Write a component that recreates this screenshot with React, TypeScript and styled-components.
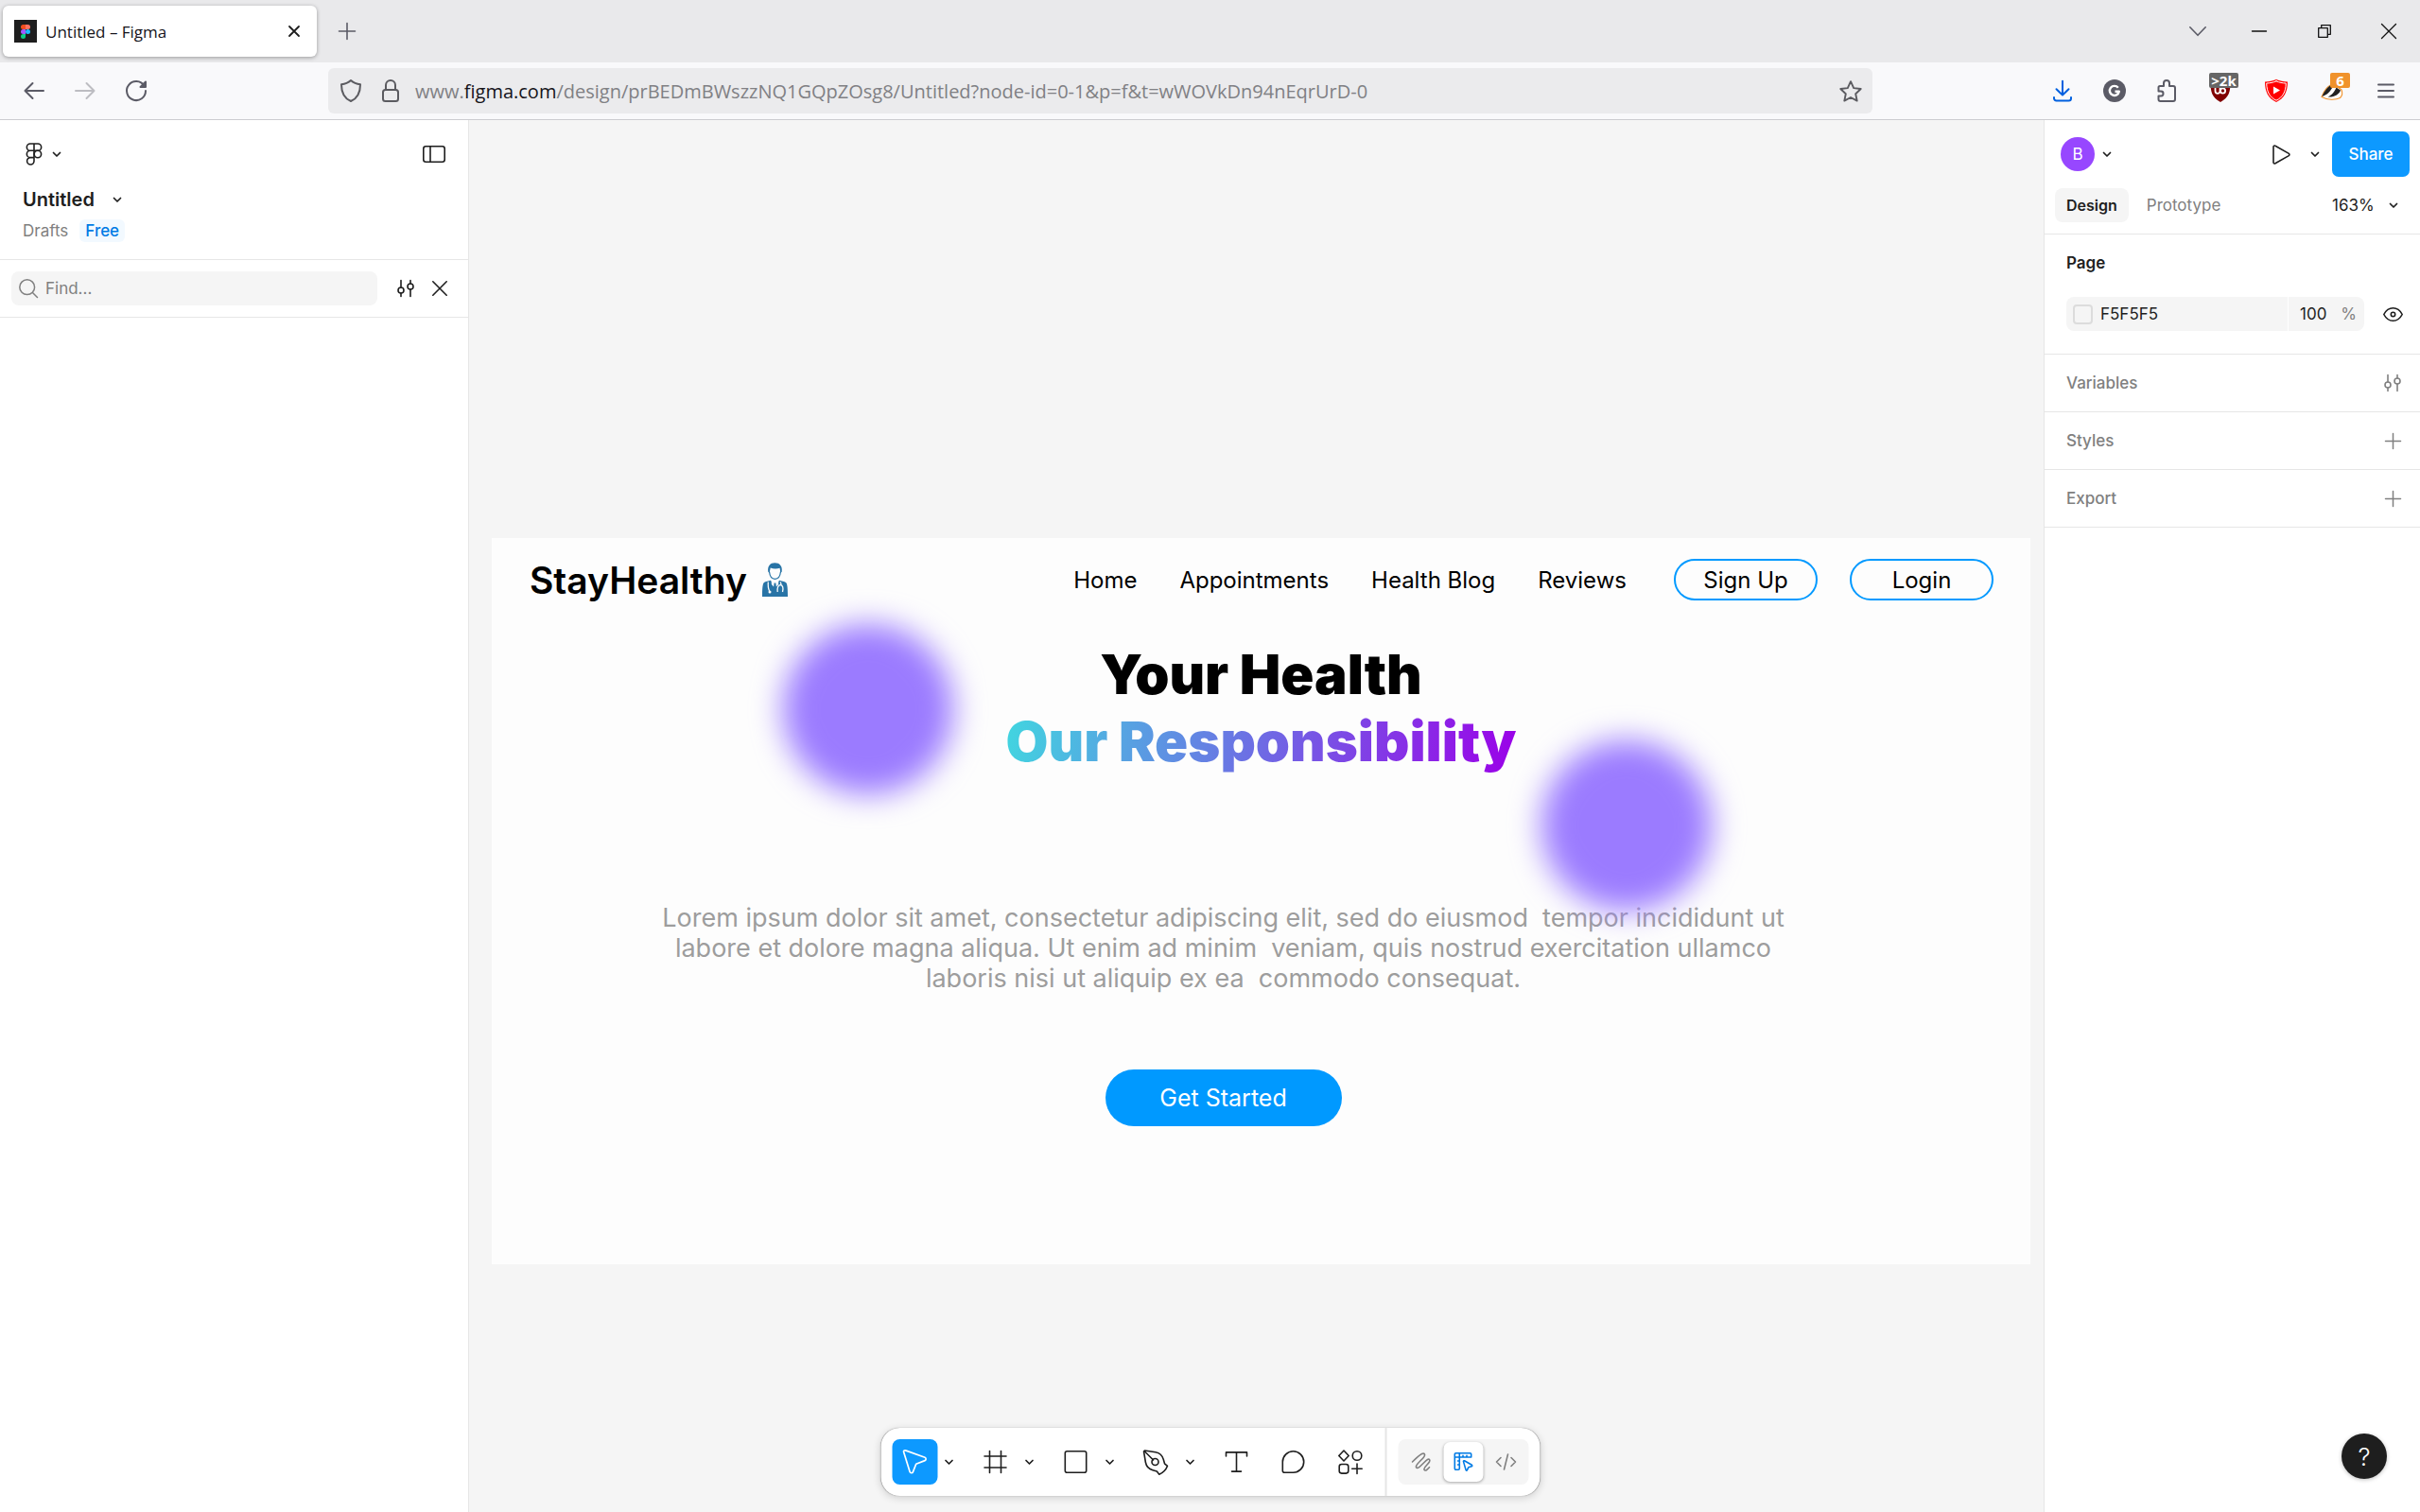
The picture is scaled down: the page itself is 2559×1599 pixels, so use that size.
import React from "react";
import styled, { createGlobalStyle } from "styled-components";

const ui = `Inter, "Liberation Sans", sans-serif`;
const chromeFont = `"Open Sans", "Noto Sans", sans-serif`;

const GlobalStyle = createGlobalStyle`
  *, *::before, *::after { box-sizing: border-box; }
  body { margin: 0; background: #f5f5f5; font-family: ${ui}; color: #1e1e1e; }
  button, input, select { font: inherit; color: inherit; border: 0; padding: 0; margin: 0; background: none; min-width: 0; }
  button { cursor: pointer; }
  a { color: inherit; text-decoration: none; }
  h1, h2, p { margin: 0; font-weight: inherit; }
  svg { display: block; flex: none; overflow: visible; }
`;

/* ---------- icons ---------- */

type IconProps = {
  w: number;
  h: number;
  stroke?: number;
  color?: string;
  children: React.ReactNode;
};

const Icon = ({ w, h, stroke = 2, color = "currentColor", children }: IconProps) => (
  <svg
    width={w}
    height={h}
    viewBox={`0 0 ${w} ${h}`}
    fill="none"
    stroke={color}
    strokeWidth={stroke}
    strokeLinecap="round"
    strokeLinejoin="round"
    aria-hidden="true"
  >
    {children}
  </svg>
);

const Chevron = () => (
  <Icon w={8} h={5} stroke={1.7}>
    <path d="M.5 .5 4 4 7.500 .5" />
  </Icon>
);

const Favicon = () => (
  <svg width="24" height="24" viewBox="0 0 24 24" aria-hidden="true">
    <rect width="24" height="24" fill="#1e1e1e" />
    <path d="M9.500 5H12v5H9.500a2.500 2.500 0 0 1 0-5z" fill="#f24e1e" />
    <path d="M12 5h2.500a2.500 2.500 0 0 1 0 5H12z" fill="#ff7262" />
    <path d="M9.500 10H12v5H9.500a2.500 2.500 0 0 1 0-5z" fill="#a259ff" />
    <circle cx="14.500" cy="12.500" r="2.500" fill="#1abcfe" />
    <path d="M9.500 15H12v2.500A2.500 2.500 0 1 1 9.500 15z" fill="#0acf83" />
  </svg>
);

const FigmaMark = () => (
  <Icon w={18} h={24} stroke={1.6}>
    <path d="M9 1H5a3.650 3.650 0 0 0 0 7.300h4zM9 1h4a3.650 3.650 0 0 1 0 7.300H9zM9 8.300H5a3.650 3.650 0 0 0 0 7.300h4zM9 15.600H5A3.700 3.700 0 1 0 9 19.300z" />
    <circle cx="12.900" cy="12" r="3.700" />
  </Icon>
);

const Sliders = () => (
  <Icon w={18} h={18} stroke={1.6}>
    <path d="M4 .5v7.500M4 14v3.500M14 .5v3.500M14 10v7.500" />
    <circle cx="4" cy="11" r="3" />
    <circle cx="14" cy="7" r="3" />
  </Icon>
);

const Plus = () => (
  <Icon w={17} h={17} stroke={1.5}>
    <path d="M8.500 .5v16M.5 8.500h16" />
  </Icon>
);

const Doctor = () => (
  <svg width="27" height="36" viewBox="0 0 27 36" aria-hidden="true">
    <path
      d="M7.500 9.500C8 14.500 10.500 17.300 13.500 17.300S19 14.500 19.500 9.500"
      fill="none"
      stroke="#2874a6"
      strokeWidth="1.200"
    />
    <path
      d="M6.300 9.800C5.400 3.500 8.600.3 13.300.3c5 0 8.300 3.200 7.400 9.500l-1.400 1.300-.7-5.300c-3.300 1.200-7.200.9-9.900-.2l-1.100 5.500z"
      fill="#2874a6"
    />
    <path
      d="M0 36c0-7 .3-12 1.300-14.200C2.300 20 5 20 9 18.800l4.500 6 4.500-6c4 1.200 6.700 1.200 7.700 3C26.700 24 27 29 27 36z"
      fill="#2874a6"
    />
    <path d="M9.600 18.500 13.500 24l3.900-5.500-.3 4.500-2.600 3-1-1.500-1 1.500-2.600-3z" fill="#fdfdfd" />
    <path d="M12.600 21.500h1.800l1 8.500h-3.800z" fill="#2874a6" />
    <path
      d="M6.300 20.500c-.3 4 0 7 1.300 9.500M19.200 20.500c.6 1.300.8 2 .8 3.200M16.200 31c-.6-4.500.6-7.300 3-7.300s3.500 3 2.300 7.300"
      fill="none"
      stroke="#fdfdfd"
      strokeWidth="1.300"
    />
    <circle cx="8" cy="31" r="1.500" fill="#fdfdfd" />
  </svg>
);

/* ---------- shared controls ---------- */

const IconButton = styled.button<{ $w?: number; $h?: number; $color?: string }>`
  display: flex;
  flex: none;
  align-items: center;
  justify-content: center;
  width: ${(p) => p.$w ?? 36}px;
  height: ${(p) => p.$h ?? 36}px;
  color: ${(p) => p.$color ?? "#1e1e1e"};
`;

const Spacer = styled.div<{ $basis?: number }>`
  flex: ${(p) => (p.$basis ? `0 1 ${p.$basis}px` : "1")};
`;

/* ---------- browser chrome ---------- */

const Screen = styled.div`
  position: relative;
  display: flex;
  flex-direction: column;
  min-height: 100vh;
`;

const TabStrip = styled.div`
  display: flex;
  align-items: center;
  height: 66px;
  padding-left: 3px;
  background: #e9e9eb;
  font-family: ${chromeFont};
`;

const Tab = styled.div`
  display: flex;
  align-items: center;
  width: 332px;
  height: 54px;
  padding: 0 6px 0 12px;
  gap: 9px;
  border-radius: 6px;
  background: #fff;
  box-shadow: 0 1px 4px rgba(0, 0, 0, 0.35);
  font-size: 17px;
  color: #15141a;
`;

const TabTitle = styled.span`
  flex: 1;
`;

const NavBar = styled.div`
  display: flex;
  align-items: center;
  height: 61px;
  padding: 0 12px;
  border-bottom: 1px solid #ccccd0;
  background: #f9f9fb;
`;

const NavGroup = styled.div<{ $gap: number }>`
  display: flex;
  gap: ${(p) => p.$gap}px;
`;

const UrlBar = styled.div`
  display: flex;
  flex: 1;
  align-items: center;
  height: 48px;
  padding: 0 2px 0 4px;
  border-radius: 6px;
  background: #ebebed;
  font-family: ${chromeFont};
  font-size: 20px;
  color: #808084;
`;

const UrlText = styled.div`
  flex: 1;
  padding-left: 4px;
  white-space: nowrap;
  overflow: hidden;

  b {
    font-weight: 400;
    color: #15141a;
  }
`;

const ExtensionButton = styled(IconButton)`
  position: relative;
`;

const Badge = styled.span<{ $bg: string; $w: number }>`
  position: absolute;
  top: 5px;
  right: 7px;
  width: ${(p) => p.$w}px;
  height: 16px;
  border-radius: 2px;
  background: ${(p) => p.$bg};
  color: #fff;
  font: 700 15px/16px ${chromeFont};
  text-align: center;
  white-space: nowrap;
`;

const BrowserTabs = () => (
  <TabStrip>
    <Tab>
      <Favicon />
      <TabTitle>Untitled – Figma</TabTitle>
      <IconButton aria-label="Close tab">
        <Icon w={12} h={12} stroke={1.8}>
          <path d="M1 1l10 10M11 1 1 11" />
        </Icon>
      </IconButton>
    </Tab>
    <IconButton $w={64} $h={48} $color="#5b5b66" aria-label="New tab">
      <Icon w={18} h={18} stroke={1.6}>
        <path d="M9 .5v17M.5 9h17" />
      </Icon>
    </IconButton>
    <Spacer />
    <IconButton $w={62} $h={48} $color="#5b5b66" aria-label="List all tabs">
      <Icon w={18} h={10} stroke={1.6}>
        <path d="M.8 .8 9 9.300 17.200 .8" />
      </Icon>
    </IconButton>
    <IconButton $w={68} $h={48} aria-label="Minimize">
      <Icon w={16} h={2} stroke={1.3} color="#111">
        <path d="M.5 1h15" />
      </Icon>
    </IconButton>
    <IconButton $w={70} $h={48} aria-label="Restore">
      <Icon w={14} h={14} stroke={1.3} color="#111">
        <path d="M.7 3.700h9.600v9.600H.7zM3.700 3.500V.7h9.600v9.600h-2.800" />
      </Icon>
    </IconButton>
    <IconButton $w={66} $h={48} aria-label="Close window">
      <Icon w={16} h={16} stroke={1.3} color="#111">
        <path d="M.5 .5l15 15M15.500 .5l-15 15" />
      </Icon>
    </IconButton>
  </TabStrip>
);

const BrowserNav = () => (
  <NavBar>
    <NavGroup $gap={6}>
      <IconButton $w={48} $h={48} $color="#5b5b66" aria-label="Back">
        <Icon w={22} h={18} stroke={2}>
          <path d="M21 9H1.500M9.500 1 1.500 9l8 8" />
        </Icon>
      </IconButton>
      <IconButton $w={48} $h={48} $color="#bdbdc2" aria-label="Forward">
        <Icon w={22} h={18} stroke={2}>
          <path d="M1 9h19.500M12.500 1l8 8-8 8" />
        </Icon>
      </IconButton>
      <IconButton $w={48} $h={48} $color="#5b5b66" aria-label="Reload">
        <Icon w={22} h={22} stroke={2}>
          <path d="M19.500 5.800A10 10 0 1 0 21 11" />
          <path d="M21 1.500V7h-5.500z" fill="currentColor" />
        </Icon>
      </IconButton>
    </NavGroup>
    <Spacer $basis={179} />
    <UrlBar>
      <IconButton $w={40} $color="#5b5b60" aria-label="Tracking protection">
        <Icon w={22} h={24} stroke={2}>
          <path d="M11 1c3 2.800 6.200 3.900 10 4.200 0 8-2 14.300-10 17.800C3 19.500 1 13.200 1 5.200 4.800 4.900 8 3.800 11 1z" />
        </Icon>
      </IconButton>
      <IconButton $w={44} $color="#5b5b60" aria-label="Site information">
        <Icon w={18} h={24} stroke={2}>
          <rect x="1" y="11" width="16" height="12" rx="2.500" />
          <path d="M4 11V6a5 5 0 0 1 10 0v5" />
        </Icon>
      </IconButton>
      <UrlText role="textbox" aria-label="Address">
        www.<b>figma.com</b>/design/prBEDmBWszzNQ1GQpZOsg8/Untitled?node-id=0-1&amp;p=f&amp;t=wWOVkDn94nEqrUrD-0
      </UrlText>
      <IconButton $w={42} $color="#5b5b60" aria-label="Bookmark this page">
        <Icon w={24} h={23} stroke={1.9}>
          <path d="M12 1.200l3.200 6.900 7.500.9-5.500 5.200 1.500 7.400L12 18l-6.700 3.600 1.500-7.400L1.300 9l7.500-.9z" />
        </Icon>
      </IconButton>
    </UrlBar>
    <Spacer $basis={177} />
    <NavGroup $gap={7}>
      <IconButton $w={48} $h={48} $color="#0060df" aria-label="Downloads">
        <Icon w={20} h={22} stroke={2}>
          <path d="M10 .8v14.500M3.500 9.300 10 15.500l6.500-6.200M1 18v1a2.500 2.500 0 0 0 2.500 2.500h13A2.500 2.500 0 0 0 19 19v-1" />
        </Icon>
      </IconButton>
      <IconButton $w={48} $h={48} aria-label="Grammar checker">
        <Icon w={24} h={24} stroke={2.400}>
          <circle cx="12" cy="12" r="12" fill="#5b5b66" stroke="none" />
          <path d="M15.800 8.800a5 5 0 1 0 1 4H12.500" stroke="#fff" strokeLinecap="butt" />
        </Icon>
      </IconButton>
      <IconButton $w={48} $h={48} $color="#5b5b66" aria-label="Extensions">
        <Icon w={20} h={24} stroke={2}>
          <path d="M1.500 8.500A1.500 1.500 0 0 1 3 7h4V4a3 3 0 0 1 6 0v3h4a2 2 0 0 1 2 2v12a2 2 0 0 1-2 2H3.500a2 2 0 0 1-2-2v-3.500H4a2.500 2.500 0 0 0 0-5H1.500z" />
        </Icon>
      </IconButton>
      <ExtensionButton $w={52} $h={48} aria-label="Content blocker">
        <Icon w={22} h={24} stroke={1.8}>
          <path d="M11 0c3 2 7 3 10.500 3 0 10-1.500 16-10.500 21C2 19 .5 13 .5 3 4 3 8 2 11 0z" fill="#800000" stroke="none" />
          <path d="M5.500 9.500v2.800a2.500 2.500 0 0 0 5 0V9.500" stroke="#fff" />
          <circle cx="13.500" cy="12" r="2.600" stroke="#fff" />
        </Icon>
        <Badge $bg="#666" $w={31}>&gt;2k</Badge>
      </ExtensionButton>
      <ExtensionButton $w={52} $h={48} aria-label="Video tools">
        <Icon w={24} h={24} stroke={1}>
          <path d="M12 0c4 1.800 7.500 2.200 12 2.500C24 13 20.500 20 12 24 3.500 20 0 13 0 2.500 4.500 2.200 8 1.800 12 0z" fill="#f00" stroke="none" />
          <path d="M12 1.800c3.600 1.600 6.500 2 10.300 2.300C22 13 19 18.800 12 22.200 5 18.800 2 13 1.700 4.100 5.500 3.800 8.400 3.400 12 1.800z" stroke="#fff" />
          <path d="M9 7.500v8l7-4z" fill="#fff" stroke="none" />
        </Icon>
      </ExtensionButton>
      <ExtensionButton $w={52} $h={48} aria-label="Privacy tools">
        <Icon w={24} h={24} stroke={1.2}>
          <path d="M1 18.500C3 13 8 5 14 5l8 6c1.500 4 1 6-1.500 8.500-5 2.500-13 2.500-19.500-1z" fill="#fff" stroke="#f0922b" />
          <path d="M1.500 18c1-3 5-9.500 8.500-11.500L13 7c-2 5-6 9.500-11.500 11zM7.500 18.500c4-1.500 7.500-6 9-10l4.500 3c-1.500 4-6 7.500-13.500 7z" fill="#222" stroke="none" />
        </Icon>
        <Badge $bg="#f0922b" $w={21}>6</Badge>
      </ExtensionButton>
      <IconButton $w={48} $h={48} $color="#5b5b66" aria-label="Menu">
        <Icon w={18} h={16} stroke={2}>
          <path d="M1 1.500h16M1 8h16M1 14.500h16" />
        </Icon>
      </IconButton>
    </NavGroup>
  </NavBar>
);

/* ---------- editor layout ---------- */

const Editor = styled.main`
  display: grid;
  grid-template-columns: 496px 1fr 398px;
  flex: 1;
`;

const LeftPanel = styled.aside`
  border-right: 1px solid #e6e6e6;
  background: #fff;
  font-size: 17px;
`;

const FileHeader = styled.div`
  padding: 18px;
  border-bottom: 1px solid #e6e6e6;
`;

const PanelRow = styled.div<{ $h: number }>`
  display: flex;
  align-items: center;
  height: ${(p) => p.$h}px;
`;

const MainMenu = styled.button`
  display: flex;
  align-items: center;
  gap: 11px;
  height: 36px;
  padding: 0 9px;
`;

const FileName = styled.button`
  display: flex;
  align-items: center;
  gap: 20px;
  height: 42px;
  margin-top: 9px;
  padding: 0 6px;
  font-size: 20px;
  font-weight: 600;
`;

const Location = styled.div`
  display: flex;
  align-items: center;
  gap: 12px;
  height: 24px;
  padding-left: 6px;
  color: #808080;
`;

const PlanBadge = styled.span`
  padding: 0 6px;
  border-radius: 6px;
  background: #f2f9ff;
  color: #007be5;
  font-weight: 450;
  line-height: 24px;
`;

const SearchRow = styled.div`
  display: flex;
  align-items: center;
  height: 61px;
  padding: 0 12px;
  border-bottom: 1px solid #e6e6e6;
`;

const SearchField = styled.label`
  display: flex;
  flex: 1;
  align-items: center;
  gap: 8px;
  height: 36px;
  margin-right: 12px;
  padding: 0 8px;
  border-radius: 8px;
  background: #f5f5f5;
  color: #808080;
`;

const SearchInput = styled.input`
  flex: 1;
  outline: 0;
  &::placeholder {
    color: #808080;
    opacity: 1;
  }
`;

const FilePanel = () => (
  <LeftPanel>
    <FileHeader>
      <PanelRow $h={36}>
        <MainMenu aria-label="Main menu">
          <FigmaMark />
          <Chevron />
        </MainMenu>
        <Spacer />
        <IconButton aria-label="Toggle panels">
          <Icon w={24} h={18} stroke={1.6}>
            <rect x=".8" y=".8" width="22.400" height="16.400" rx="2.500" />
            <path d="M8 1v16" />
          </Icon>
        </IconButton>
      </PanelRow>
      <FileName>
        Untitled
        <Chevron />
      </FileName>
      <Location>
        Drafts
        <PlanBadge>Free</PlanBadge>
      </Location>
    </FileHeader>
    <SearchRow>
      <SearchField>
        <Icon w={20} h={20} stroke={1.5}>
          <circle cx="8.700" cy="8.700" r="7.900" />
          <path d="M14.500 14.500 19.500 19.500" />
        </Icon>
        <SearchInput aria-label="Find" placeholder="Find..." />
      </SearchField>
      <IconButton aria-label="Search settings">
        <Sliders />
      </IconButton>
      <IconButton aria-label="Close search">
        <Icon w={16} h={16} stroke={1.6}>
          <path d="M.8 .8l14.400 14.400M15.200 .8.8 15.200" />
        </Icon>
      </IconButton>
    </SearchRow>
  </LeftPanel>
);

/* ---------- right panel ---------- */

const RightPanel = styled.aside`
  border-left: 1px solid #e6e6e6;
  background: #fff;
  font-size: 17px;
`;

const PanelHead = styled.div`
  padding: 12px 11px;
  border-bottom: 1px solid #e6e6e6;
`;

const Account = styled.button`
  display: flex;
  align-items: center;
  gap: 9px;
  padding-left: 6px;
`;

const Avatar = styled.span`
  width: 36px;
  border-radius: 50%;
  background: #9747ff;
  color: #fff;
  line-height: 36px;
  text-align: center;
`;

const ShareButton = styled.button`
  width: 82px;
  height: 48px;
  margin-left: 6px;
  border-radius: 7px;
  background: #0d99ff;
  color: #fff;
  font-weight: 450;
`;

const TabRow = styled.div`
  display: flex;
  align-items: center;
  height: 36px;
  margin-top: 12px;
`;

const PanelTab = styled.button<{ $active?: boolean }>`
  height: 36px;
  margin-right: 7px;
  padding: 0 12px;
  border-radius: 8px;
  background: ${(p) => (p.$active ? "#f5f5f5" : "transparent")};
  color: ${(p) => (p.$active ? "#1e1e1e" : "#808080")};
  font-size: ${(p) => (p.$active ? 16 : 17)}px;
  font-weight: ${(p) => (p.$active ? 600 : 400)};
`;

const ZoomControl = styled.label`
  display: flex;
  align-items: center;
  gap: 16px;
  padding-right: 13px;
`;

const ZoomSelect = styled.select`
  appearance: none;
  outline: 0;
`;

const PageSection = styled.section`
  padding: 12px 11px 24px 23px;
  border-bottom: 1px solid #e6e6e6;
`;

const SectionTitle = styled.h2`
  font-size: 17px;
  font-weight: 600;
  line-height: 36px;
`;

const FillRow = styled.div`
  display: flex;
  align-items: center;
  gap: 12px;
  margin-top: 18px;
`;

const FillField = styled.div`
  display: flex;
  flex: 1;
  align-items: stretch;
  height: 36px;
  border-radius: 8px;
  background: #f5f5f5;
`;

const ColorPart = styled.label`
  display: flex;
  flex: 1;
  align-items: center;
  gap: 8px;
  padding-left: 7px;
`;

const Swatch = styled.span`
  width: 21px;
  height: 21px;
  border: 2px solid #dcdcdc;
  border-radius: 4px;
  background: #f5f5f5;
`;

const ColorInput = styled.input`
  width: 120px;
  outline: 0;
`;

const OpacityPart = styled.label`
  display: flex;
  align-items: center;
  justify-content: space-between;
  width: 81px;
  padding: 0 8px 0 12px;
  border-left: 1px solid #fff;
  color: #808080;
`;

const OpacityInput = styled.input`
  width: 36px;
  color: #1e1e1e;
  outline: 0;
`;

const CollapsedSection = styled.section`
  display: flex;
  align-items: center;
  justify-content: space-between;
  height: 61px;
  padding: 0 11px 0 23px;
  border-bottom: 1px solid #e6e6e6;
  color: #808080;
`;

const CollapsedTitle = styled.h2`
  font-size: 17px;
  font-weight: 500;
`;

const sections = [
  { title: "Variables", icon: <Sliders /> },
  { title: "Styles", icon: <Plus /> },
  { title: "Export", icon: <Plus /> },
];

const DesignPanel = () => (
  <RightPanel>
    <PanelHead>
      <PanelRow $h={48}>
        <Account aria-label="Account B">
          <Avatar>B</Avatar>
          <Chevron />
        </Account>
        <Spacer />
        <IconButton $w={48} aria-label="Present">
          <Icon w={19} h={21} stroke={1.6}>
            <path d="M1 2.300v16.400a1.300 1.300 0 0 0 2 1.100L17.300 11.600a1.300 1.300 0 0 0 0-2.200L3 1.200a1.300 1.300 0 0 0-2 1.100z" />
          </Icon>
        </IconButton>
        <IconButton $w={24} aria-label="Present options">
          <Chevron />
        </IconButton>
        <ShareButton>Share</ShareButton>
      </PanelRow>
      <TabRow>
        <PanelTab $active>Design</PanelTab>
        <PanelTab>Prototype</PanelTab>
        <Spacer />
        <ZoomControl>
          <ZoomSelect aria-label="Zoom" defaultValue="163%">
            <option>163%</option>
          </ZoomSelect>
          <Chevron />
        </ZoomControl>
      </TabRow>
    </PanelHead>
    <PageSection>
      <SectionTitle>Page</SectionTitle>
      <FillRow>
        <FillField>
          <ColorPart>
            <Swatch />
            <ColorInput aria-label="Page color" defaultValue="F5F5F5" />
          </ColorPart>
          <OpacityPart>
            <OpacityInput aria-label="Opacity" defaultValue="100" />%
          </OpacityPart>
        </FillField>
        <IconButton aria-label="Toggle visibility">
          <Icon w={21} h={15} stroke={1.6}>
            <path d="M.8 7.500C3 3.300 6.500.8 10.500.8s7.500 2.500 9.700 6.700c-2.200 4.200-5.700 6.700-9.700 6.700S3 11.700.8 7.500z" />
            <circle cx="10.500" cy="7.500" r="2.200" />
          </Icon>
        </IconButton>
      </FillRow>
    </PageSection>
    {sections.map((s) => (
      <CollapsedSection key={s.title}>
        <CollapsedTitle>{s.title}</CollapsedTitle>
        <IconButton $color="#808080" aria-label={s.title}>
          {s.icon}
        </IconButton>
      </CollapsedSection>
    ))}
  </RightPanel>
);

/* ---------- canvas and artboard ---------- */

const Canvas = styled.div`
  position: relative;
  background: #f5f5f5;
`;

const Artboard = styled.div`
  position: absolute;
  top: 442px;
  left: 24px;
  right: 14px;
  min-height: 768px;
  background: #fdfdfd;
  color: #000;
`;

const SiteHeader = styled.header`
  display: flex;
  align-items: center;
  height: 88px;
  padding: 0 39px 0 40px;
  font-size: 24px;
`;

const Brand = styled.span`
  margin-right: 16px;
  font-size: 39px;
  font-weight: 600;
`;

const SiteNav = styled.nav`
  display: flex;
  gap: 45px;
  margin-right: 50px;
`;

const OutlineButton = styled.button`
  width: 152px;
  height: 44px;
  border: 2px solid #0099ff;
  border-radius: 22px;

  & + & {
    margin-left: 34px;
  }
`;

const Headline = styled.h1`
  margin-top: 21px;
  font-size: 58px;
  font-weight: 900;
  line-height: 71px;
  text-align: center;
`;

const GradientLine = styled.span`
  display: block;
  width: fit-content;
  margin: 0 auto;
  background: linear-gradient(100deg, #41d6e0 0%, #9b00e8 100%);
  background-clip: text;
  -webkit-background-clip: text;
  color: transparent;
`;

const Pitch = styled.div`
  display: flex;
  flex-direction: column;
  align-items: center;
  gap: 80px;
  margin-top: 135px;
  padding-right: 80px;
`;

const Copy = styled.p`
  color: #9d9d9d;
  font-size: 27px;
  line-height: 32px;
  text-align: center;
  white-space: pre;
`;

const PrimaryButton = styled.button`
  width: 250px;
  height: 60px;
  border-radius: 30px;
  background: #0099ff;
  color: #fff;
  font-size: 25px;
`;

const Glow = styled.div<{ $x: number; $y: number }>`
  position: absolute;
  left: ${(p) => p.$x}px;
  top: ${(p) => p.$y}px;
  width: 180px;
  height: 180px;
  border-radius: 50%;
  background: #9b7bff;
  filter: blur(16px);
  pointer-events: none;
`;

const copyText = [
  "Lorem ipsum dolor sit amet, consectetur adipiscing elit, sed do eiusmod  tempor incididunt ut",
  "labore et dolore magna aliqua. Ut enim ad minim  veniam, quis nostrud exercitation ullamco",
  "laboris nisi ut aliquip ex ea  commodo consequat.",
].join("\n");

const LandingPage = () => (
  <Artboard>
    <SiteHeader>
      <Brand>StayHealthy</Brand>
      <Doctor />
      <Spacer />
      <SiteNav>
        {["Home", "Appointments", "Health Blog", "Reviews"].map((t) => (
          <a href="#" key={t}>
            {t}
          </a>
        ))}
      </SiteNav>
      <OutlineButton>Sign Up</OutlineButton>
      <OutlineButton>Login</OutlineButton>
    </SiteHeader>
    <Headline>
      Your Health
      <GradientLine>Our Responsibility</GradientLine>
    </Headline>
    <Pitch>
      <Copy>{copyText}</Copy>
      <PrimaryButton>Get Started</PrimaryButton>
    </Pitch>
    <Glow $x={308} $y={91} />
    <Glow $x={1110} $y={214} />
  </Artboard>
);

/* ---------- floating toolbar ---------- */

const Toolbar = styled.div`
  position: absolute;
  bottom: 17px;
  left: 50%;
  transform: translateX(-50%);
  display: flex;
  align-items: center;
  height: 72px;
  padding: 0 12px;
  border-radius: 20px;
  background: #fff;
  box-shadow: 0 0 1px rgba(0, 0, 0, 0.4), 0 2px 8px rgba(0, 0, 0, 0.16);
`;

const Tools = styled.div`
  display: flex;
  align-items: center;
  gap: 12px;
`;

const ToolGroup = styled.div`
  display: flex;
`;

const ToolButton = styled(IconButton)<{ $active?: boolean }>`
  width: 48px;
  height: 48px;
  border-radius: 8px;
  background: ${(p) => (p.$active ? "#0d99ff" : "transparent")};
  color: ${(p) => (p.$active ? "#fff" : "#1e1e1e")};
`;

const Divider = styled.div`
  width: 2px;
  height: 72px;
  margin: 0 12px 0 13px;
  background: #e6e6e6;
`;

const ModeSwitch = styled.div`
  display: flex;
  align-items: center;
  height: 48px;
  padding: 0 3px;
  gap: 3px;
  border-radius: 8px;
  background: #f5f5f5;
`;

const ModeButton = styled(IconButton)<{ $active?: boolean }>`
  width: 42px;
  height: 42px;
  border-radius: 7px;
  background: ${(p) => (p.$active ? "#fff" : "transparent")};
  color: ${(p) => (p.$active ? "#007be5" : "#808080")};
  box-shadow: ${(p) => (p.$active ? "0 1px 3px rgba(0, 0, 0, 0.3)" : "none")};
`;

const HelpButton = styled.button`
  position: absolute;
  right: 35px;
  bottom: 35px;
  width: 48px;
  height: 48px;
  border-radius: 50%;
  background: #1e1e1e;
  color: #fff;
  font-size: 26px;
  font-weight: 300;
  box-shadow: 0 1px 4px rgba(0, 0, 0, 0.25);
`;

const tools = [
  {
    name: "Move",
    menu: true,
    active: true,
    icon: (
      <Icon w={26} h={26} stroke={1.700}>
        <path d="M1.100 2.600 7.600 23.500c.5 1.600 2.700 1.700 3.300.1l3.300-8.400 9.300-3.600c1.500-.6 1.500-2.700 0-3.300L3 .9C1.800.4.700 1.400 1.100 2.600z" />
      </Icon>
    ),
  },
  {
    name: "Frame",
    menu: true,
    icon: (
      <Icon w={24} h={24} stroke={1.600}>
        <path d="M6 .5v23M18 .5v23M.5 6h23M.5 18h23" />
      </Icon>
    ),
  },
  {
    name: "Rectangle",
    menu: true,
    icon: (
      <Icon w={24} h={24} stroke={1.600}>
        <rect x=".8" y=".8" width="22.400" height="22.400" rx="2" />
      </Icon>
    ),
  },
  {
    name: "Pen",
    menu: true,
    icon: (
      <Icon w={27} h={27} stroke={1.600}>
        <path d="M2 1 13.500 2.800C18 3.600 20.500 6 21.800 10.500L23 14.800l3 2.500c-1.500 4-4.600 7.200-8.700 8.900l-2.500-3.200-4.300-1.200C6 20.500 3.700 18 2.900 13.500L1 2z" />
        <path d="M1.500 1.500 11 11" />
        <circle cx="13" cy="13" r="3.500" />
      </Icon>
    ),
  },
  {
    name: "Text",
    icon: (
      <Icon w={24} h={22} stroke={1.600}>
        <path d="M1 5V.9h22V5M12 .9v20.200M7 21.100h10" />
      </Icon>
    ),
  },
  {
    name: "Comment",
    icon: (
      <Icon w={24} h={24} stroke={1.600}>
        <path d="M.8 12A11.200 11.200 0 1 1 12 23.200H2.800a2 2 0 0 1-2-2z" />
      </Icon>
    ),
  },
  {
    name: "Actions",
    icon: (
      <Icon w={26} h={26} stroke={1.600}>
        <path d="M6.500 1 11.700 6.500 6.500 12 1.300 6.500zM20.500 15v10.500M15.200 20.200h10.500" />
        <circle cx="20.500" cy="6.500" r="4.800" />
        <rect x="1.700" y="15.500" width="9.600" height="9.600" rx="2.500" />
      </Icon>
    ),
  },
];

const EditorToolbar = () => (
  <Toolbar>
    <Tools>
      {tools.map((t) => (
        <ToolGroup key={t.name}>
          <ToolButton $active={t.active} aria-label={t.name}>
            {t.icon}
          </ToolButton>
          {t.menu && (
            <IconButton $w={25} $h={48} aria-label={`${t.name} tools`}>
              <Chevron />
            </IconButton>
          )}
        </ToolGroup>
      ))}
    </Tools>
    <Divider />
    <ModeSwitch>
      <ModeButton aria-label="Draw">
        <Icon w={20} h={20} stroke={1.600}>
          <path d="M1 10C4.500 6.500 8 3 11 1.500c2.500-1.200 4 .6 2.500 2.800C11.500 7.500 6 11.500 5 14.500c-.5 1.800 1 2.500 2.800 1.300C11 13.500 14.500 9 17 7.500c1.800-1 3 .5 2 2.300-1.300 2.700-5 5-5.500 7.500-.3 1.500 1 2.200 2.300 1.400 1.200-.7 2.200-2 3.200-3" />
        </Icon>
      </ModeButton>
      <ModeButton $active aria-label="Design">
        <Icon w={20} h={20} stroke={1.600}>
          <path d="M2 .8h15a1.200 1.200 0 0 1 1.200 1.200v3H5.800v12a1.200 1.200 0 0 1-1.200 1.200H2A1.200 1.200 0 0 1 .8 17V2A1.200 1.200 0 0 1 2 .8zM.8 5h5M5.800 .8V5M9.500 3.200V5M13.500 3.200V5M4 9h1.800M4 13h1.800" />
          <path d="M10 9.600l2.600 9c.2.600 1 .7 1.300.1l1.400-2.900 3.400-1.100c.7-.2.700-1 .2-1.400l-7.900-4.500c-.6-.3-1.200.2-1 .8z" />
        </Icon>
      </ModeButton>
      <ModeButton aria-label="Dev mode">
        <Icon w={22} h={18} stroke={1.600}>
          <path d="M5.500 4.500 1 9l4.500 4.500M16.500 4.500 21 9l-4.500 4.500M13 1 9 17" />
        </Icon>
      </ModeButton>
    </ModeSwitch>
  </Toolbar>
);

export default function App() {
  return (
    <Screen>
      <GlobalStyle />
      <BrowserTabs />
      <BrowserNav />
      <Editor>
        <FilePanel />
        <Canvas>
          <LandingPage />
        </Canvas>
        <DesignPanel />
      </Editor>
      <EditorToolbar />
      <HelpButton aria-label="Help">?</HelpButton>
    </Screen>
  );
}
